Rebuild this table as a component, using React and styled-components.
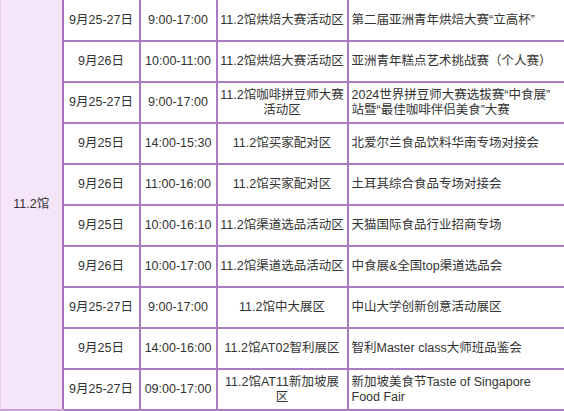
import styled, { createGlobalStyle } from 'styled-components'

const rows = [
  ['9月25-27日', '9:00-17:00', '11.2馆烘焙大赛活动区', '第二届亚洲青年烘焙大赛“立高杯”'],
  ['9月26日', '10:00-11:00', '11.2馆烘焙大赛活动区', '亚洲青年糕点艺术挑战赛（个人赛）'],
  [
    '9月25-27日',
    '9:00-17:00',
    '11.2馆咖啡拼豆师大赛活动区',
    '2024世界拼豆师大赛选拔赛“中食展”\u200b站暨“最佳咖啡伴侣美食”大赛',
  ],
  ['9月25日', '14:00-15:30', '11.2馆买家配对区', '北爱尔兰食品饮料华南专场对接会'],
  ['9月26日', '11:00-16:00', '11.2馆买家配对区', '土耳其综合食品专场对接会'],
  ['9月25日', '10:00-16:10', '11.2馆渠道选品活动区', '天猫国际食品行业招商专场'],
  ['9月26日', '10:00-17:00', '11.2馆渠道选品活动区', '中食展&全国top渠道选品会'],
  ['9月25-27日', '9:00-17:00', '11.2馆中大展区', '中山大学创新创意活动展区'],
  ['9月25日', '14:00-16:00', '11.2馆AT02智利展区', '智利Master class大师班品鉴会'],
  ['9月25-27日', '09:00-17:00', '11.2馆AT11新加坡展区', '新加坡美食节Taste of Singapore Food Fair'],
]

const colWidths = [62, 77, 77, 131, 217]

const GlobalStyle = createGlobalStyle`
  body {
    margin: 0;
    background: #ffffff;
    font-family: "Liberation Sans", "Noto Sans CJK SC", sans-serif;
  }
`

const ScheduleTable = styled.table`
  width: 564px;
  table-layout: fixed;
  border-collapse: collapse;
  font-size: 12.5px;
  line-height: 15px;
  color: #333333;
  border-left: 1px solid #ecd0f2;
  border-right: 2px solid #b488c9;
  border-bottom: 2px solid #c9a2da;

  tr:first-child td {
    border-top: 0;
  }
`

const Row = styled.tr`
  height: 41px;
`

const Cell = styled.td`
  border: 2px solid #ab7bc3;
  padding: ${(p) => (p.$left ? '0 5px 0 3px' : '0 2px')};
  text-align: ${(p) => (p.$left ? 'left' : 'center')};
  vertical-align: middle;
  white-space: ${(p) => (p.$nowrap ? 'nowrap' : 'normal')};
`

const HallCell = styled.td`
  background: #f4e5f8;
  border-right: 2px solid #a772c1;
  border-bottom: 2px solid #c9a2da;
  text-align: center;
  vertical-align: middle;
  padding: 0;
`

function App() {
  return (
    <>
      <GlobalStyle />
      <ScheduleTable>
        <colgroup>
          {colWidths.map((width, index) => (
            <col key={index} style={{ width }} />
          ))}
        </colgroup>
        <tbody>
          {rows.map(([date, time, place, event], index) => (
            <Row key={index}>
              {index === 0 && <HallCell rowSpan={rows.length}>11.2馆</HallCell>}
              <Cell $nowrap>{date}</Cell>
              <Cell $nowrap>{time}</Cell>
              <Cell>{place}</Cell>
              <Cell $left>{event}</Cell>
            </Row>
          ))}
        </tbody>
      </ScheduleTable>
    </>
  )
}

export default App
